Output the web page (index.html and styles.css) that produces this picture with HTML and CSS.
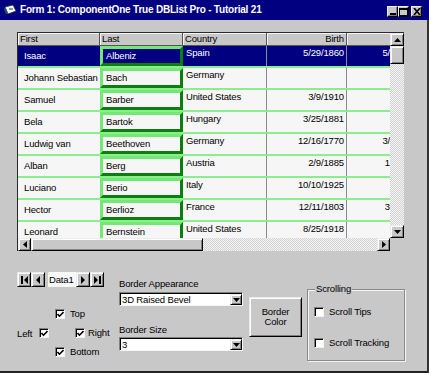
FILE: index.html
```html
<!DOCTYPE html>
<html lang="en">
<head>
  <meta charset="UTF-8" />
  <title>Form 1: ComponentOne True DBList Pro - Tutorial 21</title>
  <link rel="stylesheet" href="styles.css">
</head>
<body>
  <div class="window">
    <!-- caption -->
    <div class="titlebar">
      <svg class="app-icon" width="13" height="12" viewBox="0 0 13 12">
        <polygon points="1,3 9,1 12,7 4,10" fill="#ffffff" stroke="#303030" stroke-width="0.8" />
        <polygon points="1,3 4,10 2,10 0,5" fill="#0f5f6f" />
        <rect x="5" y="4" width="4" height="2" fill="#7fa0b0" />
      </svg>
      <span class="title">Form 1: ComponentOne True DBList Pro - Tutorial 21</span>
      <div class="caption-buttons">
        <span class="cap-btn">
          <svg width="8" height="7" viewBox="0 0 8 7"><rect x="1" y="5" width="6" height="2" fill="#000" /></svg>
        </span>
        <span class="cap-btn">
          <svg width="9" height="8" viewBox="0 0 9 8"><rect x="0.5" y="0.5" width="8" height="7" fill="none" stroke="#000" /><rect x="0" y="0" width="9" height="2" fill="#000" /></svg>
        </span>
        <span class="cap-btn close">
          <svg width="8" height="7" viewBox="0 0 8 7"><path d="M1 0 L7 7 M7 0 L1 7" stroke="#000" stroke-width="1.7" /></svg>
        </span>
      </div>
    </div>

    <div class="client">
      <!-- the list control -->
      <div class="dblist">
        <div class="list-main">
          <div class="list-cells">
            <div class="list-head">
              <div class="hcell c-first">First</div>
              <div class="hcell c-last">Last</div>
              <div class="hcell c-country">Country</div>
              <div class="hcell c-birth">Birth</div>
              <div class="hcell c-death"></div>
            </div>

            <div class="list-row selected">
              <div class="cell c-first">Isaac</div>
              <div class="cell c-last">Albeniz</div>
              <div class="cell c-country">Spain</div>
              <div class="cell c-birth">5/29/1860</div>
              <div class="cell c-death">5/</div>
            </div>
            <div class="list-row">
              <div class="cell c-first">Johann Sebastian</div>
              <div class="cell c-last">Bach</div>
              <div class="cell c-country">Germany</div>
              <div class="cell c-birth"></div>
              <div class="cell c-death"></div>
            </div>
            <div class="list-row">
              <div class="cell c-first">Samuel</div>
              <div class="cell c-last">Barber</div>
              <div class="cell c-country">United States</div>
              <div class="cell c-birth">3/9/1910</div>
              <div class="cell c-death"></div>
            </div>
            <div class="list-row">
              <div class="cell c-first">Bela</div>
              <div class="cell c-last">Bartok</div>
              <div class="cell c-country">Hungary</div>
              <div class="cell c-birth">3/25/1881</div>
              <div class="cell c-death"></div>
            </div>
            <div class="list-row">
              <div class="cell c-first">Ludwig van</div>
              <div class="cell c-last">Beethoven</div>
              <div class="cell c-country">Germany</div>
              <div class="cell c-birth">12/16/1770</div>
              <div class="cell c-death">3/</div>
            </div>
            <div class="list-row">
              <div class="cell c-first">Alban</div>
              <div class="cell c-last">Berg</div>
              <div class="cell c-country">Austria</div>
              <div class="cell c-birth">2/9/1885</div>
              <div class="cell c-death">1</div>
            </div>
            <div class="list-row">
              <div class="cell c-first">Luciano</div>
              <div class="cell c-last">Berio</div>
              <div class="cell c-country">Italy</div>
              <div class="cell c-birth">10/10/1925</div>
              <div class="cell c-death"></div>
            </div>
            <div class="list-row">
              <div class="cell c-first">Hector</div>
              <div class="cell c-last">Berlioz</div>
              <div class="cell c-country">France</div>
              <div class="cell c-birth">12/11/1803</div>
              <div class="cell c-death">3</div>
            </div>
            <div class="list-row">
              <div class="cell c-first">Leonard</div>
              <div class="cell c-last">Bernstein</div>
              <div class="cell c-country">United States</div>
              <div class="cell c-birth">8/25/1918</div>
              <div class="cell c-death"></div>
            </div>
          </div>

          <div class="vscroll">
            <div class="sb-btn">
              <svg width="7" height="4" viewBox="0 0 7 4"><polygon points="3.5,0 7,4 0,4" fill="#000" /></svg>
            </div>
            <div class="sb-btn v-thumb"></div>
            <div class="sb-track"></div>
            <div class="sb-btn">
              <svg width="7" height="4" viewBox="0 0 7 4"><polygon points="0,0 7,0 3.5,4" fill="#000" /></svg>
            </div>
          </div>
        </div>

        <div class="hscroll-row">
          <div class="hscroll">
            <div class="sb-btn">
              <svg width="4" height="7" viewBox="0 0 4 7"><polygon points="4,0 4,7 0,3.5" fill="#000" /></svg>
            </div>
            <div class="sb-btn h-thumb"></div>
            <div class="sb-track"></div>
            <div class="sb-btn">
              <svg width="4" height="7" viewBox="0 0 4 7"><polygon points="0,0 4,3.5 0,7" fill="#000" /></svg>
            </div>
          </div>
          <div class="corner"></div>
        </div>
      </div>

      <!-- form controls under the list -->
      <div class="controls">
        <div class="nav-col">
          <div class="data-nav">
            <span class="nav-btn">
              <svg width="7" height="8" viewBox="0 0 7 8"><rect x="0" y="0" width="2" height="8" fill="#000" /><polygon points="7,0 7,8 3,4" fill="#000" /></svg>
            </span>
            <span class="nav-btn">
              <svg width="4" height="8" viewBox="0 0 4 8"><polygon points="4,0 4,8 0,4" fill="#000" /></svg>
            </span>
            <span class="nav-label">Data1</span>
            <span class="nav-btn">
              <svg width="4" height="8" viewBox="0 0 4 8"><polygon points="0,0 4,4 0,8" fill="#000" /></svg>
            </span>
            <span class="nav-btn">
              <svg width="7" height="8" viewBox="0 0 7 8"><polygon points="0,0 4,4 0,8" fill="#000" /><rect x="5" y="0" width="2" height="8" fill="#000" /></svg>
            </span>
          </div>

          <div class="sides">
            <div class="side-row indent">
              <span class="cb checked"><svg width="7" height="7" viewBox="0 0 7 7"><polyline points="0.5,3 2.5,5.2 6.5,1" fill="none" stroke="#000" stroke-width="1.6" /></svg></span>
              <span class="cb-label">Top</span>
            </div>
            <div class="side-row">
              <span class="left-label">Left</span>
              <span class="cb checked"><svg width="7" height="7" viewBox="0 0 7 7"><polyline points="0.5,3 2.5,5.2 6.5,1" fill="none" stroke="#000" stroke-width="1.6" /></svg></span>
              <span class="cb checked right-cb"><svg width="7" height="7" viewBox="0 0 7 7"><polyline points="0.5,3 2.5,5.2 6.5,1" fill="none" stroke="#000" stroke-width="1.6" /></svg></span>
              <span class="cb-label tight">Right</span>
            </div>
            <div class="side-row indent">
              <span class="cb checked"><svg width="7" height="7" viewBox="0 0 7 7"><polyline points="0.5,3 2.5,5.2 6.5,1" fill="none" stroke="#000" stroke-width="1.6" /></svg></span>
              <span class="cb-label">Bottom</span>
            </div>
          </div>
        </div>

        <div class="border-col">
          <div class="field-label first-label">Border Appearance</div>
          <div class="combo">
            <span class="combo-text">3D Raised Bevel</span>
            <span class="combo-btn"><svg width="7" height="4" viewBox="0 0 7 4"><polygon points="0,0 7,0 3.5,4" fill="#000" /></svg></span>
          </div>
          <div class="field-label second-label">Border Size</div>
          <div class="combo">
            <span class="combo-text">3</span>
            <span class="combo-btn"><svg width="7" height="4" viewBox="0 0 7 4"><polygon points="0,0 7,0 3.5,4" fill="#000" /></svg></span>
          </div>
        </div>

        <div class="push-btn">Border<br>Color</div>

        <fieldset class="scrolling">
          <legend>Scrolling</legend>
          <div class="scroll-opt first-opt">
            <span class="cb"></span>
            <span class="cb-label">Scroll Tips</span>
          </div>
          <div class="scroll-opt">
            <span class="cb"></span>
            <span class="cb-label">Scroll Tracking</span>
          </div>
        </fieldset>
      </div>
    </div>
  </div>
</body>
</html>
```

FILE: styles.css
```css
body {
  margin: 0;
  font-family: "Liberation Sans", Arial, sans-serif;
  font-size: 9.5px;
  letter-spacing: -0.15px;
  color: #000;
  background: #c8c8c8;
}

.window {
  width: 429px;
  height: 373px;
  background: #c8c8c8;
  overflow: hidden;
}

/* caption bar */
.titlebar {
  height: 20px;
  background: #000080;
  color: #fff;
  display: flex;
  align-items: center;
  padding: 0 7px 0 4px;
  box-sizing: border-box;
}

.app-icon {
  margin-right: 3px;
  flex: none;
}

.title {
  font-weight: bold;
  font-size: 10px;
  letter-spacing: -0.2px;
  line-height: 12px;
  white-space: nowrap;
}

.caption-buttons {
  margin-left: auto;
  align-self: flex-end;
  margin-bottom: 3px;
  display: flex;
}

.cap-btn {
  width: 11px;
  height: 11px;
  box-sizing: border-box;
  background: #c8c8c8;
  border: 1px solid;
  border-color: #f0f0f0 #000 #000 #f0f0f0;
  box-shadow: inset -1px -1px #808080;
  display: flex;
  align-items: center;
  justify-content: center;
}

.cap-btn.close {
  margin-left: 2px;
}

.client {
  height: 353px;
  box-sizing: border-box;
  border-right: 2px solid #333;
  border-bottom: 2px solid #222;
  padding-top: 12px;
}

/* DBList */
.dblist {
  margin-left: 17px;
  width: 387px;
  box-sizing: border-box;
  border-left: 1px solid #2a2a2a;
  border-top: 1px solid #2a2a2a;
}

.list-main {
  display: flex;
  height: 205px;
}

.list-cells {
  width: 372px;
  overflow: hidden;
  background: #f6f6f6;
}

.list-head {
  display: flex;
  height: 13px;
  box-sizing: border-box;
  border-bottom: 1px solid #555;
  background: #c8c8c8;
}

.hcell {
  flex: none;
  box-sizing: border-box;
  border-right: 1px solid #555;
  box-shadow: inset 1px 1px #f4f4f4;
  padding: 0 2px;
  line-height: 12px;
  white-space: nowrap;
}

.c-first { width: 82px; }
.c-last { width: 83px; }
.c-country { width: 84px; }
.c-birth { width: 80px; text-align: right; }
.c-death { width: 43px; text-align: right; }

.hcell.c-death {
  border-right: none;
}

.list-row {
  display: flex;
  height: 22px;
  box-sizing: border-box;
  border-bottom: 2px solid #8ced8c;
}

.cell {
  flex: none;
  box-sizing: border-box;
  line-height: 12px;
  white-space: nowrap;
  overflow: hidden;
}

.cell.c-first {
  padding-left: 6px;
  display: flex;
  align-items: center;
}

.cell.c-last {
  border: 3px solid;
  border-color: #74e874 #0b7f0b #0b7f0b #74e874;
  padding-left: 3px;
  display: flex;
  align-items: center;
}

.cell.c-country {
  padding: 1px 0 0 3px;
  border-right: 1px solid #8a8a8a;
}

.cell.c-birth {
  padding: 1px 2px 0 0;
  border-right: 1px solid #8a8a8a;
}

.cell.c-death {
  padding: 1px 0 0 0;
}

.list-row.selected .cell {
  background: #000080;
  color: #fff;
}

/* scroll bars */
.sb-btn {
  flex: none;
  box-sizing: border-box;
  background: #c8c8c8;
  border: 1px solid;
  border-color: #ececec #000 #000 #ececec;
  box-shadow: inset 1px 1px #fff, inset -1px -1px #808080;
  display: flex;
  align-items: center;
  justify-content: center;
}

.sb-track {
  flex: 1;
  background: repeating-conic-gradient(#d2d2d2 0 25%, #f4f4f4 0 50%) 0 0 / 2px 2px;
}

.vscroll {
  width: 14px;
  display: flex;
  flex-direction: column;
}

.vscroll .sb-btn {
  height: 13px;
}

.vscroll .v-thumb {
  height: 18px;
}

.hscroll-row {
  display: flex;
  height: 13px;
}

.hscroll {
  width: 372px;
  display: flex;
}

.hscroll .sb-btn {
  width: 13px;
}

.hscroll .h-thumb {
  width: 172px;
}

.corner {
  width: 14px;
  background: #c8c8c8;
}

/* controls below */
.controls {
  display: flex;
  padding-left: 17px;
}

.nav-col {
  width: 102px;
  flex: none;
}

.data-nav {
  margin-top: 21px;
  display: flex;
  height: 15px;
  width: 88px;
}

.nav-btn {
  width: 14px;
  height: 15px;
  box-sizing: border-box;
  background: #c8c8c8;
  border: 1px solid;
  border-color: #ececec #000 #000 #ececec;
  box-shadow: inset 1px 1px #fff, inset -1px -1px #808080;
  display: flex;
  align-items: center;
  justify-content: center;
}

.nav-label {
  width: 28px;
  margin-left: 3px;
  background: #f8f8f8;
  line-height: 15px;
  padding-left: 1px;
  box-sizing: border-box;
}

.sides {
  margin-top: 21px;
}

.side-row {
  display: flex;
  align-items: center;
  height: 12px;
  margin-bottom: 7px;
}

.side-row.indent {
  padding-left: 38px;
}

.left-label {
  width: 22px;
}

.cb {
  flex: none;
  width: 10px;
  height: 10px;
  box-sizing: border-box;
  background: #fff;
  border: 1px solid;
  border-color: #808080 #f4f4f4 #f4f4f4 #808080;
  box-shadow: inset 1px 1px #000;
  display: flex;
  align-items: center;
  justify-content: center;
  padding: 1px 0 0 1px;
}

.right-cb {
  margin-left: 26px;
}

.cb-label {
  margin-left: 5px;
  line-height: 12px;
  white-space: nowrap;
}

.cb-label.tight {
  margin-left: 3px;
}

.border-col {
  width: 124px;
  flex: none;
}

.field-label {
  line-height: 12px;
  white-space: nowrap;
}

.first-label {
  margin-top: 27px;
  margin-bottom: 2px;
}

.second-label {
  margin-top: 18px;
  margin-bottom: 1px;
}

.combo {
  display: flex;
  height: 14px;
  box-sizing: border-box;
  background: #fff;
  border: 1px solid;
  border-color: #808080 #f4f4f4 #f4f4f4 #808080;
  box-shadow: inset 1px 1px #000;
}

.combo-text {
  flex: 1;
  padding: 1px 0 0 2px;
  line-height: 11px;
}

.combo-btn {
  width: 12px;
  margin: 1px 0 0 0;
  box-sizing: border-box;
  background: #c8c8c8;
  border: 1px solid;
  border-color: #ececec #000 #000 #ececec;
  box-shadow: inset 1px 1px #fff, inset -1px -1px #808080;
  display: flex;
  align-items: center;
  justify-content: center;
}

.push-btn {
  flex: none;
  width: 53px;
  height: 40px;
  margin: 46px 0 0 6px;
  box-sizing: border-box;
  background: #c8c8c8;
  border: 1px solid;
  border-color: #ececec #000 #000 #ececec;
  box-shadow: inset 1px 1px #fff, inset -1px -1px #808080;
  display: flex;
  align-items: center;
  justify-content: center;
  text-align: center;
  line-height: 10px;
}

.scrolling {
  flex: none;
  width: 98px;
  height: 78px;
  min-width: 0;
  margin: 32px 0 0 5px;
  padding: 0 0 0 6px;
  box-sizing: border-box;
  border: 1px solid #8a8a8a;
  box-shadow: 1px 1px 0 #f4f4f4, inset 1px 1px 0 #f4f4f4;
}

.scrolling legend {
  padding: 0 1px;
  margin-left: 1px;
  line-height: 12px;
  background: #c8c8c8;
}

.scroll-opt {
  display: flex;
  align-items: center;
  height: 12px;
}

.scroll-opt .cb-label {
  margin-left: 5px;
}

.first-opt {
  margin-top: 11px;
  margin-bottom: 19px;
}
```
